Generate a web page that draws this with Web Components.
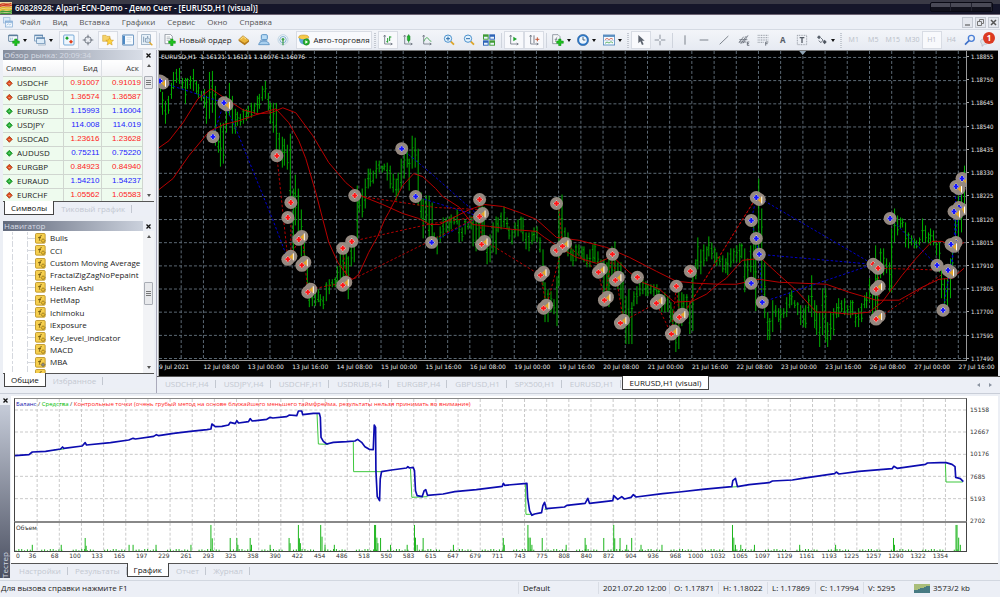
<!DOCTYPE html>
<html lang="ru">
<head>
<meta charset="utf-8">
<title>60828928: Alpari-ECN-Demo - Демо Счет - [EURUSD,H1 (visual)]</title>
<style>
html,body{margin:0;height:100%}
body{font-family:"Open Sans","Noto Sans",sans-serif;font-size:8px;line-height:12px;color:#222;background:#eceff5}
</style>
</head>
<body>
<trade-terminal></trade-terminal>
<script>
const BASE = `*{box-sizing:border-box}
button{font:inherit;color:inherit;background:none;border:0;padding:0;margin:0;cursor:default;white-space:nowrap}
svg{display:block}`;

function define(name, html) {
  customElements.define(name, class extends HTMLElement {
    constructor() {
      super();
      const t = document.createElement('template');
      t.innerHTML = '<style>' + BASE + '</style>' + (typeof html === 'function' ? html(this) : html);
      this.attachShadow({mode: 'open'}).append(t.content.cloneNode(true));
    }
  });
}

/* ---------- icons, drawn on a 36 unit square ---------- */
const axes = '<path d="M8 4v26h22M5 8l3-5 3 5M26 27l5 3-5 3" fill="none" stroke="#6a727e" stroke-width="2.4"/>';
const plus = '<path d="M20 15h7v6h7v7h-7v7h-7v-7h-6v-7h6z" fill="#1fc01f" stroke="#0b8f12" stroke-width="1.5"/>';
const ICONS = {
  newchart: '<rect x="2" y="3" width="27" height="19" rx="1" fill="#f4f8fc" stroke="#4d7192" stroke-width="2.5"/><path d="M2 5h27" stroke="#4d7192" stroke-width="3"/><path d="M8 18v-7M13 17v-6" stroke="#7fa6c4" stroke-width="2"/>' + plus,
  profiles: '<rect x="2" y="3" width="24" height="18" fill="#eaf3fb" stroke="#5b83ab" stroke-width="2"/><rect x="8" y="11" width="24" height="17" fill="#dcebf8" stroke="#5b83ab" stroke-width="2"/><path d="M8 13h24M3 5h24" stroke="#5b83ab" stroke-width="3"/><path d="M12 33h23V19" fill="none" stroke="#8fa6bd" stroke-width="2"/>',
  watch: '<rect x="2" y="3" width="31" height="30" rx="3" fill="#eef6fd" stroke="#5f9bd0" stroke-width="2.5"/><path d="M12 7l5.500 5.500-5.500 5.500-5.500-5.500z" fill="#18a32a"/><path d="M24 17l6 6-6 6-6-6z" fill="#e2401c"/>',
  target: '<circle cx="18" cy="18" r="10" fill="none" stroke="#606873" stroke-width="2.5"/><path d="M18 2v11M18 23v11M2 18h11M23 18h11" stroke="#606873" stroke-width="2.5"/>',
  folder: '<path d="M2 4h10l3 3h9v15H2z" fill="#f5d269" stroke="#c99a2a" stroke-width="1.5"/><path d="M23 11l3.500 7 8 1-6 5 2 9-7.500-4.500-7.500 4.500 2-9-6-5 8-1z" fill="#ffd43c" stroke="#c8901a" stroke-width="1.500"/>',
  terminal: '<rect x="1" y="3" width="34" height="30" rx="2" fill="#f7fbff" stroke="#3f76ae" stroke-width="2.500"/><path d="M3 5h6v26H3z" fill="#4d89c4"/><path d="M14 11h16M14 17h12M14 23h14" stroke="#bccddd" stroke-width="1.500"/>',
  tester: '<rect x="2" y="2" width="26" height="30" fill="#e7f1f9" stroke="#7e9ab3" stroke-width="2"/><path d="M8 8v17M14 12v13M20 6v19" stroke="#6d8ca8" stroke-width="2.500"/><circle cx="20" cy="19" r="7" fill="#d6eafaaa" stroke="#8296a8" stroke-width="2"/><path d="M25 25l9 9" stroke="#e3ab2d" stroke-width="4"/>',
  order: '<path d="M3 1h16l6 6v22H3z" fill="#fbfcfd" stroke="#6d7682" stroke-width="2"/><path d="M8 9h10M8 14h13M8 19h9" stroke="#8c959f" stroke-width="1.800"/>' + plus,
  diamond: '<path d="M2 17L15 5l18 14-13 12z" fill="#eab53a" stroke="#9f6c12" stroke-width="1.500"/><path d="M2 17l18 10 13-8v4L20 34 2 21z" fill="#b57c1c"/><path d="M8 16l8-7 8 6" fill="none" stroke="#fce08c" stroke-width="3"/>',
  person: '<rect x="10" y="2" width="18" height="15" rx="3" fill="#b9dcf6" stroke="#3e82bd" stroke-width="2.500"/><path d="M7 31V19h21" fill="none" stroke="#5b93c4" stroke-width="2"/><path d="M2 32c1-7 7-11 16-11s15 4 16 11z" fill="#a9cfee" stroke="#3f7db6" stroke-width="2"/>',
  signal: '<g fill="none" stroke-width="2.500"><circle cx="18" cy="17" r="15" stroke="#b7d0e0"/><circle cx="18" cy="17" r="9.500" stroke="#6fa9cc"/></g><circle cx="18" cy="16" r="4" fill="#42a64a"/><path d="M18 16v18" stroke="#3c9b45" stroke-width="3.500"/>',
  auto: '<ellipse cx="17" cy="10" rx="15" ry="7" fill="#f7c947" stroke="#b98717" stroke-width="1.500"/><path d="M3 12c0 10 5 19 14 19s13-9 14-19c-8 5-20 5-28 0z" fill="#66a8d8"/><circle cx="25" cy="24" r="9.500" fill="#25b02e" stroke="#0f7a19" stroke-width="1.500"/><path d="M22 19l8 5-8 5z" fill="#fff"/>',
  bars: axes + '<path d="M17 12v14M13 23h4M23 7v14M23 9h5" stroke="#1f9d2d" stroke-width="3" fill="none"/>',
  candle: axes + '<path d="M20 1v25" stroke="#138c20" stroke-width="2.500"/><rect x="16" y="5" width="8" height="15" rx="2" fill="#20b52e" stroke="#0f7d1b" stroke-width="1.500"/>',
  line: axes + '<path d="M9 22C13 12 18 8 22 14s5 7 9 8" fill="none" stroke="#35a141" stroke-width="2.500"/>',
  zoomin: '<path d="M23 22l10 10" stroke="#dca52b" stroke-width="5.500"/><circle cx="15" cy="14" r="11" fill="#e3f2fd" stroke="#4d92cd" stroke-width="3"/><path d="M15 8v12M9 14h12" stroke="#2c6eaa" stroke-width="3"/>',
  zoomout: '<path d="M23 22l10 10" stroke="#dca52b" stroke-width="5.500"/><circle cx="15" cy="14" r="11" fill="#e3f2fd" stroke="#4d92cd" stroke-width="3"/><path d="M9 14h12" stroke="#2c6eaa" stroke-width="3"/>',
  tiles: '<rect x="0" y="1" width="17" height="16" fill="#3f9b35"/><rect x="19" y="1" width="17" height="16" fill="#2d63b7"/><rect x="0" y="19" width="17" height="16" fill="#2d63b7"/><rect x="19" y="19" width="17" height="16" fill="#3f9b35"/><path d="M3 8h11v6H3zM22 8h11v6H22zM3 26h11v6H3zM22 26h11v6H22z" fill="#e9f3fb"/>',
  scroll: axes + '<path d="M16 8l11 7-11 7z" fill="#1fa42e"/>',
  shift: axes + '<path d="M18 4v23" stroke="#5e6672" stroke-width="2.500"/><path d="M28 10v12M22 16h12" stroke="#c4593a" stroke-width="3"/>',
  indic: '<path d="M2 2h16l6 6v21H2z" fill="#f6f8fa" stroke="#6d7682" stroke-width="2"/><path d="M9 24c4 0 2-15 7-15M8 16h8" fill="none" stroke="#5f6975" stroke-width="2"/>' + plus,
  clock: '<circle cx="18" cy="18" r="14" fill="#eef6fd" stroke="#2a76c7" stroke-width="5"/><circle cx="18" cy="18" r="17" fill="none" stroke="#174b86" stroke-width="1.500"/><path d="M18 9v9h7" fill="none" stroke="#2e4a68" stroke-width="2.500"/>',
  template: '<rect x="1" y="3" width="34" height="30" fill="#f7fbff" stroke="#4a82ba" stroke-width="2.500"/><path d="M1 6h34" stroke="#4a82ba" stroke-width="5"/><path d="M6 17l6-4 6 4 6-4 6 3" fill="none" stroke="#c5432c" stroke-width="2.200"/><path d="M6 28l6-4 6 3 6-4 6 4" fill="none" stroke="#2e9c3a" stroke-width="2.200"/><path d="M3 20h30" stroke="#9ab4cc" stroke-width="1.500"/>',
  cursor: '<path d="M10 3v25l6-6 5 11 5-2-5-11h8z" fill="#5c636e"/>',
  cross: '<path d="M18 2v13M18 21v13M2 18h13M21 18h13" stroke="#7a818b" stroke-width="2.500"/>',
  vline: '<path d="M18 4v28" stroke="#666d77" stroke-width="2.500"/>',
  hline: '<path d="M5 18h26" stroke="#666d77" stroke-width="2.500"/>',
  trend: '<path d="M5 31L31 6" stroke="#666d77" stroke-width="2.500"/>',
  channel: '<path d="M3 26L17 8M8 30L25 6M15 28L30 4M4 17h24M3 24h22" stroke="#5a616c" stroke-width="2.200"/><path d="M34 24h-6v10h6M28 29h5" fill="none" stroke="#4d545e" stroke-width="2.200"/>',
  fibo: '<path d="M2 4h32M2 11h32M2 18h32M2 25h18" stroke="#757c86" stroke-width="2.200" stroke-dasharray="3 2"/><path d="M26 35V24h8M26 29h6" fill="none" stroke="#4d545e" stroke-width="2.200"/>',
  textbox: '<rect x="4" y="4" width="28" height="28" fill="none" stroke="#757c86" stroke-width="2" stroke-dasharray="3 2"/><path d="M11 11h14M18 11v16" stroke="#555c66" stroke-width="4"/>',
  arrows: '<path d="M9 4l6 6-6 6-6-6z" fill="#59606b"/><path d="M15 12l7 7M8 20l7 6 6-8" stroke="#59606b" stroke-width="2.500" fill="none"/><path d="M26 17l6 7-6 7-6-7z" fill="#4d545e"/>',
  search: '<circle cx="22" cy="13" r="9" fill="none" stroke="#4a7fd6" stroke-width="4"/><path d="M15 20L3 32" stroke="#3c6fc8" stroke-width="5"/>'
};
const icon = (n, s = 12) => `<svg width="${s}" height="${s}" viewBox="0 0 36 36" aria-hidden="true">${ICONS[n]}</svg>`;

/* ---------- one toolbar button ---------- */
define('tool-button', el => `<style>
:host{display:flex;flex:1;height:18px}
button{flex:1;display:flex;align-items:center;justify-content:center;gap:3px;border:1px solid transparent}
:host([on]) button{background:#f8f9fc;border-color:#d8dce4}
i{border:2px solid transparent;border-top:3px solid #111;border-bottom:0}
</style><button${el.hasAttribute('label') ? ` aria-label="${el.getAttribute('label')}"` : ''}>${el.hasAttribute('icon') ? icon(el.getAttribute('icon')) : ''}<slot></slot>${el.hasAttribute('drop') ? '<i></i>' : ''}</button>`);

const tools = s => s.split(' ').map(t => {
  const [n, f] = t.split('/');
  return `<tool-button icon="${n}" label="${n}"${f === 'on' ? ' on' : ''}${f === 'drop' ? ' drop' : ''}></tool-button>`;
}).join('');

define('tool-bar', `<style>
:host{display:flex;align-items:center;height:20px;overflow:hidden;background:linear-gradient(#f3f5f9,#e6eaf2);padding-left:4px;color:#222}
.g{display:flex;flex:none}
.sep{flex:none;width:1px;height:15px;background:#cfd4dd;margin:0 2px}
.grip{flex:none;width:2px;height:15px;background:repeating-linear-gradient(#c3c8d1 0 1px,#eef1f6 1px 2px);margin:0 2px}
.tf{color:#b9bec8;font-size:7px}
b{color:#555c66}
.bell{position:relative;width:22px;height:18px}
.bell svg{position:absolute;left:2px;top:6px}
.badge{position:absolute;left:5px;top:1px;width:12px;height:12px;border-radius:6px;background:#dc3a22;color:#fff;font-weight:700;line-height:12px;text-align:center}
</style>
<div class="g" style="width:52px">${tools('newchart/drop profiles/drop')}</div>
<div class="g" style="width:98px;margin-left:3px">${tools('watch/on target folder/on terminal tester/on')}</div>
<div class="sep"></div>
<div class="g" style="width:72px"><tool-button icon="order">Новый ордер</tool-button></div>
<div class="g" style="width:59px">${tools('diamond person signal')}</div>
<div class="g" style="width:76px;margin-left:3px"><tool-button icon="auto" on>Авто-торговля</tool-button></div>
<div class="grip"></div>
<div class="g" style="width:59px">${tools('bars/on candle line')}</div>
<div class="g" style="width:60px;margin-left:2px">${tools('zoomin zoomout tiles')}</div>
<div class="sep"></div>
<div class="g" style="width:40px">${tools('scroll/on shift/on')}</div>
<div class="sep"></div>
<div class="g" style="width:76px">${tools('indic/drop clock/drop template/drop')}</div>
<div class="grip"></div>
<div class="g" style="width:39px">${tools('cursor/on cross')}</div>
<div class="sep"></div>
<div class="g" style="width:98px">${tools('vline hline trend channel fibo')}</div>
<div class="g" style="width:39px"><tool-button><b>A</b></tool-button>${tools('textbox')}</div>
<div class="g" style="width:26px">${tools('arrows/drop')}</div>
<div class="grip"></div>
<div class="g tf" style="width:117px"><tool-button>M1</tool-button><tool-button>M5</tool-button><tool-button>M15</tool-button><tool-button>M30</tool-button><tool-button on>H1</tool-button><tool-button>H4</tool-button></div>
<div class="g" style="width:17px">${tools('search')}</div>
<div class="bell"><svg width="10" height="10" viewBox="0 0 30 30"><path d="M2 12C2 4 24 4 24 13s-9 9-11 9l-7 6v-7c-3-2-4-5-4-9z" fill="#dfe3e9" stroke="#adb4be" stroke-width="2"/></svg><span class="badge">1</span></div>`);

define('title-bar', `<style>
:host{display:flex;align-items:center;height:15px;background:linear-gradient(#3a3a46 0 4px,#15162a 4px 14px,#6b6272 14px);color:#fff;font-weight:600}
svg{margin-right:3px}
.win{margin:0 7px 4px auto;align-self:flex-start;margin-top:2px;display:flex;width:63px;height:10px;border:1px solid #0a0a14;border-radius:2px;background:linear-gradient(#4a4a56 50%,#12121c 50%)}
.win button{flex:1;border-right:1px solid #22222e}
</style>
<svg width="12" height="12" viewBox="0 0 36 36"><rect width="36" height="36" fill="#e9d9a0"/><path d="M0 9c8-9 16 3 34-5M0 14c8-9 16 3 36-5" stroke="#d2371f" stroke-width="4" fill="none"/><path d="M0 20c8-9 16 3 36-5M0 26c8-9 16 3 36-5" stroke="#e3b222" stroke-width="3.500" fill="none"/><path d="M0 31c8-9 16 3 36-5M0 37c8-9 16 3 36-5" stroke="#3c9a35" stroke-width="4" fill="none"/></svg>
<span>60828928: Alpari-ECN-Demo - Демо Счет - [EURUSD,H1 (visual)]</span>
<div class="win"><button aria-label="Свернуть"></button><button aria-label="Развернуть"></button><button aria-label="Закрыть"></button></div>`);

define('menu-bar', `<style>
:host{display:flex;align-items:center;height:15px;background:#edf0f7;border-bottom:1px solid #d5dae3;color:#555}
svg{margin:0 7px 0 3px}
nav{display:flex;gap:12px}
.w{margin-left:auto;display:flex;gap:2px;padding-right:1px}
.w button{width:11px;height:11px;border:1px solid #c3c8d1;background:#e4e7ee;display:grid;place-items:center}
.w svg{margin:0}
</style>
<svg width="10" height="11" viewBox="0 0 30 33"><rect x="1" y="2" width="20" height="16" fill="#dbe9f7" stroke="#8fb2d8" stroke-width="2"/><rect x="7" y="12" width="21" height="18" fill="#f1f7fd" stroke="#7aa5d3" stroke-width="2"/><path d="M7 15h21" stroke="#7aa5d3" stroke-width="4"/><path d="M11 25l5-5 4 4 5-4" stroke="#8fb2d8" stroke-width="2" fill="none"/></svg>
<nav><button>Файл</button><button>Вид</button><button>Вставка</button><button>Графики</button><button>Сервис</button><button>Окно</button><button>Справка</button></nav>
<div class="w"><button aria-label="Свернуть окно"><svg width="7" height="7" viewBox="0 0 7 7"><path d="M1 6h5" stroke="#444"/></svg></button><button aria-label="Восстановить окно"><svg width="7" height="7" viewBox="0 0 7 7"><path d="M2.500 2.500v-2h4v4h-2M.5 2.500h4v4h-4z" stroke="#777" fill="none"/></svg></button><button aria-label="Закрыть окно"><svg width="7" height="7" viewBox="0 0 7 7"><path d="M1 1l5 5M6 1L1 6" stroke="#555" stroke-width="1.500"/></svg></button></div>`);

/* ---------- tabs along the bottom of a panel; items are split by "|" ---------- */
define('tab-strip', el => `<style>
:host{display:flex;flex:none;gap:var(--tab-gap,0);height:var(--strip,15px);background:#eceff6;border-top:1px solid #555;padding-left:var(--tab-start,1px);color:#c3c8d1}
button{height:13px;padding:0 7px;line-height:11px;position:relative}
button:not(.on)::after{content:"";position:absolute;right:0;top:3px;height:8px;border-right:1px solid #c3c8d1}
.on{background:#fff;color:#111;border:1px solid #444;border-top:0;margin-top:-1px;height:14px;line-height:13px}
:host(:not([arrows])) .on{padding:0 6px}
.end{margin-left:auto;display:flex;gap:9px;align-items:center;padding-right:6px}
.end i{border:2px solid transparent}
.l{border-right:3px solid #8a93a0!important}.r{border-left:3px solid #8a93a0!important}
</style>${el.getAttribute('tabs').split('|').map((t, i) => `<button class="${i == el.getAttribute('active') ? 'on' : ''}">${t}</button>`).join('')}${el.hasAttribute('arrows') ? '<span class="end"><i class="l"></i><i class="r"></i></span>' : ''}`);

/* ---------- docked panel with caption ---------- */
define('dock-panel', el => `<style>
:host{display:flex;flex-direction:column;min-height:0}
header{flex:none;display:flex;justify-content:space-between;height:10px;line-height:9px;background:linear-gradient(90deg,#858d9d,#dfe4ed);color:#d6dbe4;padding:0 0 0 1px}
:host([dark]) header{background:linear-gradient(90deg,#626a7c,#d3d9e4)}
header button{width:11px;height:10px;background:#eceff6;display:grid;place-items:center}
.body{flex:1;display:flex;min-height:0;background:#fff}
.c{flex:1;min-width:0;overflow:hidden;display:flex;flex-direction:column}
.sb{width:11px;flex:none;background:#f2f3f6;display:flex;flex-direction:column;align-items:center;justify-content:space-between;padding:4px 0;position:relative}
.sb i{border:2px solid transparent}
.u{border-bottom:3px solid #555!important;border-top:0!important}.d{border-top:3px solid #555!important;border-bottom:0!important}
.th{position:absolute;left:1px;width:9px;height:var(--th);top:var(--tt);border:1px solid #a9adb5;border-radius:1px;background:repeating-linear-gradient(#777 0 1px,transparent 1px 2px) center/5px 5px no-repeat,#e8e9ec}
</style><header><span>${el.getAttribute('caption')}</span><button aria-label="Закрыть"><svg width="5" height="5" viewBox="0 0 5 5"><path d="M.5.5l4 4M4.500.5l-4 4" stroke="#111" stroke-width="1.300"/></svg></button></header>
<div class="body"><div class="c"><slot></slot></div><div class="sb"><i class="u"></i><span class="th"></span><i class="d"></i></div></div><slot name="tabs"></slot>`);

const QUOTES = [['USDCHF','0.91007','0.91019',0],['GBPUSD','1.36574','1.36587',0],['EURUSD','1.15993','1.16004',1],['USDJPY','114.008','114.019',1],['USDCAD','1.23616','1.23628',0],['AUDUSD','0.75211','0.75220',1],['EURGBP','0.84923','0.84940',0],['EURAUD','1.54210','1.54237',1],['EURCHF','1.05562','1.05583',0]];
define('market-watch', `<style>
:host{display:block}
table{width:100%;border-collapse:collapse;table-layout:fixed}
col.s{width:60px}col.b{width:38px}
th{height:16px;padding:0 3px;font-weight:400;text-align:right;background:linear-gradient(#fff,#f1f2f5);border-right:1px solid #dcdfe4;color:#333}
th:first-child{text-align:left}
td{height:14px;padding:0 1px;background:#eefbee;border:1px solid #d0d6d0;border-left:0;text-align:right;line-height:12px;font-family:"Liberation Sans",sans-serif;color:#f22}
.up td{color:#22f}
td:first-child,.up td:first-child{text-align:left;color:#222;padding-left:3px;font-family:"Open Sans",sans-serif}
svg{display:inline-block;vertical-align:-1px;margin-right:4px}
</style><table><colgroup><col class="s"><col class="b"><col></colgroup><thead><tr><th>Символ</th><th>Бид</th><th>Аск</th></tr></thead><tbody>${QUOTES.map(q => `<tr class="${q[3] ? 'up' : ''}"><td><svg width="7" height="7" viewBox="0 0 21 21"><path d="M10 1l9 9-9 9-9-9z" fill="${q[3] ? '#1eae2e' : '#e04a1c'}" stroke="${q[3] ? '#0c7a18' : '#98300c'}" stroke-width="2"/><path d="${q[3] ? 'M10 6l4 5H6z' : 'M10 14l4-5H6z'}" fill="#fff6"/></svg>${q[0]}</td><td>${q[1]}</td><td>${q[2]}</td></tr>`).join('')}</tbody></table>`);

define('nav-tree', `<style>
:host{display:block;flex:1;min-height:0;overflow:hidden;contain:size}
ul{list-style:none;margin:0;padding:1px 0 0 9px;height:calc(100% + 8px);display:grid;grid-auto-rows:minmax(12px,1fr)}
li{display:grid;grid-template-columns:15px 8px 15px 1fr;align-items:center;white-space:nowrap;line-height:12px}
li::before{content:"";align-self:stretch;border-left:1px dashed #d5d8de}
li i{align-self:stretch;border-left:1px dashed #d5d8de;background:linear-gradient(#d5d8de,#d5d8de) 0 50%/7px 1px no-repeat}
</style><ul>${'Bulls|CCI|Custom Moving Average|FractalZigZagNoPepaint|Heiken Ashi|HetMap|Ichimoku|iExposure|Key_level_indicator|MACD|MBA|'.split('|').map((n, k) => `<li><i></i><svg width="11" height="11" viewBox="0 0 33 33"><rect x="1.500" y="1.500" width="29" height="29" rx="3" fill="#f6cf4e" stroke="#b88f22" stroke-width="2.500"/><path d="M20 8c-6-2-5 7-7 15M9 14h9" fill="none" stroke="#5f4708" stroke-width="2.500"/><path d="M24 17l6 6-6 6-6-6z" fill="${k === 10 ? '#8a8a8a' : '#f0c030'}" stroke="#6b5416" stroke-width="2"/></svg><span>${n}</span></li>`).join('')}</ul>`);

/* ---------- price chart ---------- */
const BARS = `160 76 92,162 92 115,165 101 124,168 96 114,171 83 99,173 72 89,176 69 83,179 68 84,182 78 89,185 78 104,187 78 89,190 76 89,193 69 91,196 81 94,198 84 98,201 91 101,204 89 108,206 96 124,209 72 119,212 71 113,215 86 146,218 136 153,220 123 167,223 123 164,226 96 133,229 83 116,232 96 134,235 109 134,237 112 126,240 114 126,243 109 124,246 109 121,248 106 118,251 103 118,254 103 114,257 96 113,259 94 109,262 86 101,265 81 99,268 93 111,270 103 124,273 103 133,276 103 156,279 133 161,282 137 168,284 139 166,287 145 170,290 134 206,293 189 258,295 175 226,298 189 240,301 210 257,304 237 270,307 262 290,309 283 308,312 290 307,315 292 307,318 290 303,320 295 307,323 297 310,326 283 302,329 280 295,332 280 288,335 278 288,337 267 288,340 253 280,343 252 285,346 250 290,348 257 300,351 243 267,354 237 263,357 186 240,359 196 213,362 189 218,365 179 209,368 169 189,370 169 187,373 171 184,376 161 179,379 161 173,382 166 173,384 164 171,387 163 181,390 166 189,393 174 193,396 179 201,398 173 196,401 159 189,404 146 179,407 146 168,409 159 191,412 136 169,415 138 168,418 149 206,421 193 219,423 199 239,426 196 223,429 196 240,432 203 243,434 233 245,437 237 255,440 227 243,443 218 238,446 218 233,449 217 232,451 215 230,454 217 225,457 210 225,459 220 243,462 228 242,465 220 235,468 222 230,471 217 230,473 217 247,476 220 252,479 200 247,482 200 243,484 207 247,487 237 265,490 235 263,493 223 253,496 217 255,498 218 233,501 213 230,504 207 228,507 218 230,509 227 240,512 230 245,515 223 238,518 220 237,521 217 233,523 218 242,526 233 250,529 233 252,532 232 245,534 228 242,537 227 243,540 238 253,543 250 287,545 283 323,548 290 323,551 292 313,554 300 315,557 277 327,559 198 287,562 195 243,565 228 243,568 233 257,571 240 262,573 250 267,576 245 262,579 245 257,582 247 260,584 247 263,587 255 268,590 250 268,593 245 263,595 243 263,598 252 270,601 260 277,604 260 297,607 263 303,609 257 308,612 247 277,615 242 283,618 263 290,621 263 300,623 273 323,626 297 345,629 290 345,632 303 345,634 292 307,637 287 305,640 282 297,643 280 295,646 282 297,648 285 297,651 285 295,654 285 297,657 285 303,659 290 305,662 295 313,665 293 313,668 297 313,671 303 323,673 310 330,676 320 353,679 287 350,682 293 327,684 295 320,687 295 315,690 303 335,693 268 332,696 260 280,698 238 270,701 250 275,704 245 267,707 247 262,709 237 257,712 243 260,715 248 264,717 253 267,720 257 266,723 256 273,726 259 274,728 253 276,731 249 268,734 249 264,737 246 263,740 244 264,742 244 259,745 249 293,748 259 279,751 246 273,754 218 286,756 232 312,759 179 253,762 209 293,765 263 319,768 313 341,770 319 341,773 301 333,776 306 318,779 309 323,781 309 331,784 309 319,787 298 318,790 293 309,792 291 306,795 301 309,798 303 316,801 306 326,804 309 328,806 306 329,809 296 313,812 276 318,815 301 329,817 306 336,820 313 348,823 289 336,826 289 343,828 323 348,831 313 341,834 309 336,837 304 319,839 299 318,842 301 313,845 299 316,848 306 316,851 301 319,853 301 316,856 313 328,859 309 328,862 304 323,865 296 309,867 293 309,870 279 303,873 286 323,876 246 323,878 263 309,881 249 279,884 249 276,887 259 274,890 263 293,892 229 293,895 209 243,898 216 236,901 218 229,903 219 228,906 223 248,909 233 249,912 236 246,915 239 249,917 241 249,920 238 246,923 219 243,926 226 243,929 233 244,931 229 246,934 231 246,937 243 256,940 243 273,942 266 299,945 279 309,948 269 313,951 259 299,953 239 273,956 206 253,959 196 246,962 189 233,965 166 209`;
const SMOOTH = [
  [159,148,169,141,183,123,198,99,211,89,226,99,243,110,258,114,271,113,283,108,296,113,313,136,329,163,346,183,363,197,383,205,403,214,419,219,430,225,440,225,450,220,470,210,485,205,503,207,520,213,537,220,557,238,580,241,607,248,630,258,657,272,677,282,697,284,720,285,737,285,760,280,780,283,827,285,850,293,877,301,900,301,923,288,940,280,953,279,965,269],
  [159,190,173,179,189,156,209,132,223,125,239,121,256,115,276,109,289,123,299,141,306,159,316,193,323,220,329,243,338,263,348,277,353,280,359,275,369,253,378,237,385,220,389,213,403,186,414,174,423,177,436,189,443,197,460,208,473,225,490,227,513,230,537,232,545,238,563,250,577,258,597,264,613,257,630,273,643,283,660,290,675,303,693,302,707,295,720,284,727,279,743,261,762,259,777,273,797,291,817,313,830,313,850,315,870,313,883,303,903,276,917,259,933,242,943,242,957,248,965,243]
];
const BLUE = '160 82 224 103 213 137,224 103 236 129 274 223 288 260,402 149 434 176 480 217,416 197 480 217,432 243 480 217,761 199 874 265 760 255,763 303 874 265,757 198 752 221 760 255 763 303,891 219 938 266 949 271,944 311 955 247 957 187,952 272 960 208 963 179';
const RED = '277 156 288 260,291 203 291 257 299 240,303 238 305 263 308 293,311 290 347 283 480 217,343 249 347 283,352 242 433 224 480 217,355 196 436 208 480 210,480 200 482 245,486 242 541 276 547 307 563 247 559 204,567 245 599 273 605 301 613 255 624 322 657 304 672 335 677 287 680 318,683 316 757 198,675 333 691 304 757 198,881 269 949 271,881 318 949 271,877 264 881 288 877 320';
/* x, y, colour, and 1 or 2 when an exit arrow sits beside the mark */
const MARKS = '160 81 b 1,224 103 b 1,213 137 b 0,402 149 b 0,416 197 b 0,432 243 b 0,277 156 r 0,291 203 r 0,288 218 r 0,288 260 r 2,299 240 r 2,302 266 r 2,308 293 r 2,343 249 r 0,352 242 r 0,343 286 r 2,355 196 r 0,480 200 r 0,480 217 r 2,482 245 r 2,541 276 r 2,544 309 r 2,557 204 r 0,557 251 r 0,563 247 r 2,599 273 r 2,605 301 r 2,613 255 r 0,616 281 r 2,621 324 r 2,638 278 r 0,657 304 r 2,672 335 r 2,677 287 r 0,680 318 r 2,691 272 r 0,757 198 b 1,752 221 b 0,757 239 b 0,760 255 b 0,752 284 b 0,763 303 b 0,891 219 b 0,938 266 b 0,949 271 b 1,944 311 b 0,957 187 b 1,963 179 b 1,960 208 b 1,955 212 b 1,957 243 b 0,952 245 b 1,874 265 r 1,879 269 r 0,877 290 r 2,877 320 r 2';
const pairs = (a) => { let s = ''; for (let i = 0; i < a.length; i += 2) s += (i ? 'L' : 'M') + a[i] + ' ' + a[i + 1]; return s; };
const traces = s => s.split(',').map(p => pairs(p.split(' '))).join('');

function plotSvg() {
  let grid = '', bars = '';
  for (let k = 1; k < 37; k++) grid += `M${(159 + k * 22.23).toFixed(1)} 51v310`;
  for (let k = 0; k < 14; k++) grid += `M159 ${(57.5 + k * 23.23).toFixed(1)}h808`;
  BARS.split(',').forEach((b, i) => {
    const [x, h, l] = b.split(' ').map(Number), d = l - h;
    const o = h + d * ((i * 37 % 10) / 14 + .15), c = h + d * ((i * 53 % 10) / 14 + .15);
    bars += `M${x + .5} ${h}V${l}M${x - .6} ${o.toFixed(1)}h1M${x + 1} ${c.toFixed(1)}h.7`;
  });
  const mark = MARKS.split(',').map(m => m.split(' ')).map(([x, y, c, p]) => {
    x = +x; y = +y; const dy = p === '1' ? 2 : -3;
    const halo = `<circle cx="${x}" cy="${y}" r="6.500"/>` + (p !== '0' ? `<circle cx="${x + 3}" cy="${y + dy}" r="6.500"/>` : '');
    const arrow = p !== '0' ? `<path d="M${x + 5.5} ${y + dy - 3}v7l-4-3.500z" fill="#e5a628"/><path d="M${x + 5.500} ${y + dy - 3}v7" stroke="#fff" stroke-width="1"/>` : '';
    return `<g fill="#958980">${halo}</g><path d="M${x} ${y - 3.3}l3.300 3.300-3.300 3.300-3.300-3.300z" fill="#e8e4e2"/>${arrow}<path d="M${x - 1} ${y - 2.5}h2v1.500h1.500v2h-1.500v1.500h-2v-1.500h-1.500v-2h1.500z" fill="${c === 'b' ? '#1414ff' : '#ff1414'}"/>`;
  }).join('');
  return `<svg viewBox="159 51 808 310" preserveAspectRatio="none" role="img" aria-label="EURUSD,H1"><path d="${grid}" stroke="#5c6974" stroke-width="1" stroke-dasharray="3 2" fill="none"/><path d="${bars}" stroke="#00b000" stroke-width="1" fill="none"/><g fill="none" stroke="#b80000"><path d="${pairs(SMOOTH[0])}"/><path d="${pairs(SMOOTH[1])}"/></g><g fill="none" stroke-dasharray="2.500 2"><path d="${traces(BLUE)}" stroke="#0000cc"/><path d="${traces(RED)}" stroke="#b40000"/></g>${mark}<path d="M800 51h7l-3.500 4z" fill="#90a4b4"/></svg>`;
}

define('price-chart', `<style>
:host{flex:1;min-height:0;display:grid;grid-template-columns:minmax(0,1fr) 31px;grid-template-rows:minmax(0,1fr) 15px;background:#000;color:#e8e8e8;font-family:"DejaVu Sans Condensed","DejaVu Sans",sans-serif;font-size:6px;line-height:8px;overflow:hidden;border-left:1px solid #aaa;border-top:1px solid #777;margin:0 2px 0 1px}
.plot{position:relative;border-right:1px solid #999;border-bottom:1px solid #999}
.plot svg{position:absolute;inset:0;width:100%;height:100%}
.t{position:absolute;left:2px;top:2px;white-space:pre;font-family:"DejaVu Sans",sans-serif}
.p{grid-column:2;grid-row:1/3;display:flex;flex-direction:column;justify-content:space-between;padding:2px 0 13px 0}
.p span::before{content:"";display:inline-block;width:2px;height:1px;background:#aaa;margin-right:2px;vertical-align:2px}
.x{grid-column:1/3;grid-row:2;display:grid;grid-template-columns:repeat(19,1fr);margin-right:-5px;padding-top:2px;white-space:nowrap;font-family:"DejaVu Sans",sans-serif}
</style><div class="plot">${plotSvg()}<span class="t">EURUSD,H1  1.16121 1.16121 1.16076 1.16076</span></div>
<div class="x">${'9 Jul 2021|12 Jul 08:00|13 Jul 00:00|13 Jul 16:00|14 Jul 08:00|15 Jul 00:00|15 Jul 16:00|16 Jul 08:00|19 Jul 00:00|19 Jul 16:00|20 Jul 08:00|21 Jul 00:00|21 Jul 16:00|22 Jul 08:00|23 Jul 00:00|23 Jul 16:00|26 Jul 08:00|27 Jul 00:00|27 Jul 16:00'.split('|').map(t => `<span>${t}</span>`).join('')}</div>
<div class="p">${'1.18855 1.18750 1.18645 1.18540 1.18435 1.18330 1.18225 1.18120 1.18015 1.17910 1.17805 1.17700 1.17595 1.17490'.split(' ').map(t => `<span>${t}</span>`).join('')}</div>`);

/* ---------- strategy tester; both plots use units of a third of a pixel ---------- */
const BALANCE = [43,195,85,192,95,184,135,182,180,175,186,169,190,173,245,166,254,156,258,163,330,156,385,148,398,143,405,145,460,137,468,132,475,135,520,128,570,122,620,117,632,115,635,100,645,108,665,107,685,103,690,95,705,99,710,90,715,97,745,93,750,84,756,91,800,86,810,80,818,82,860,78,868,73,890,75,895,61,905,61,908,72,940,68,958,68,961,80,963,140,970,152,980,160,1000,155,1040,153,1065,151,1073,146,1085,155,1095,168,1108,176,1120,177,1123,103,1127,110,1128,240,1132,318,1139,330,1141,265,1145,243,1175,238,1220,232,1224,228,1229,232,1240,230,1244,240,1247,300,1252,315,1267,318,1273,300,1278,297,1283,314,1330,310,1365,303,1430,297,1508,287,1511,278,1515,284,1582,278,1584,320,1590,360,1597,374,1605,370,1626,366,1630,345,1635,335,1640,354,1695,349,1702,344,1757,338,1765,323,1770,338,1840,330,1843,315,1855,326,1867,318,1875,325,1895,320,1902,312,1910,319,1990,309,2040,304,2110,296,2198,288,2201,270,2209,263,2215,288,2250,282,2310,276,2320,271,2380,268,2410,263,2507,249,2512,244,2520,250,2580,242,2680,234,2685,227,2695,233,2780,221,2786,217,2825,216,2842,216,2860,221,2869,228,2871,260,2885,264,2894,273];
const FUNDS = '160 178 190 175,951 70 955 160 985 161,1060 153 1061 243 1145 243,1232 235 1236 320 1283 318,1578 280 1579 371 1603 371,1635 356 1645 355,2198 289 2215 288,2840 218 2842 274 2892 274';
const VOLUME = '632 404,636 445,254 444,257 468,95 465,182 465,386 465,398 465,467 465,572 465,690 444,710 444,713 465,750 444,754 465,810 465,867 444,870 460,895 404,898 445,901 460,962 404,966 440,975 465,1003 465,1124 404,1127 404,1131 443,1134 460,1142 444,1172 465,1222 465,1244 404,1247 443,1252 465,1270 444,1361 465,1511 444,1514 465,1585 404,1588 443,1592 443,1597 465,1628 444,1700 465,1757 444,1760 465,1813 444,1843 404,1846 445,1862 444,1882 465,1897 444,1925 465,1988 465,2200 404,2204 443,2209 465,2225 465,2266 465,2402 465,2510 465,2684 444,2687 465,2872 404,2875 404,2880 443,2885 465';
const cols = (y, h) => { let s = ''; for (let k = 1; k < 43; k++) s += `M${(43 + k * 66.6).toFixed(1)} ${y}v${h}`; return s; };
const rowsAt = [58, 124, 191, 257, 324].map(y => `M43 ${y}h2859`).join('');
let small = '';
for (let k = 0; k < 330; k++) { const r = (k * k * 31 + k * 17) % 11; if (r < 5) small += `M${46 + k * 8.600} 485v-${3 + r}`; }

define('tester-panel', `<style>
:host{display:grid;grid-template-columns:10px minmax(0,1fr);column-gap:1px;flex:none;border-top:1px solid #c9ced8;padding:2px 2px 2px 0;background:#eceff5}
aside{display:flex;flex-direction:column;align-items:center}
aside button{height:9px}
.v{flex:1;width:10px;padding-bottom:2px;writing-mode:vertical-rl;transform:rotate(180deg);text-align:left;line-height:10px;color:#d4d9e2;background:linear-gradient(#4a4f60,#c5cbd8)}
main{min-width:0;display:flex;flex-direction:column}
.w{background:#fff;display:grid;grid-template-columns:minmax(0,1fr) 31px;padding:2px 0 0 3px;font-family:"DejaVu Sans",sans-serif;font-size:6px;line-height:8px;color:#333}
.a,.b{position:relative;border:1px solid #444;border-top-color:#888;height:123px}
.a{border-bottom:0}
.b{height:31px;border-top:2px solid #888}
svg{width:100%;height:100%}
.t{position:absolute;left:1px;top:1px;color:#333;white-space:nowrap}
.a .t{font-family:"Open Sans",sans-serif}
.t b{font-weight:400;color:#11a}.t u{text-decoration:none;color:#0b0}.t em{font-style:normal;color:#f22}
.y{grid-column:2;grid-row:1/3;display:flex;flex-direction:column;justify-content:space-between;height:119px;margin-top:8px;padding-left:3px}
.x{grid-column:1;display:grid;grid-template-columns:repeat(42,minmax(0,1fr));padding-right:19px;height:11px;text-align:right;align-items:start}
.x span:first-child{display:flex;justify-content:space-between;padding-left:1px}
</style><aside><button aria-label="Закрыть"><svg style="width:5px;height:5px" viewBox="0 0 5 5"><path d="M.5.5l4 4M4.500.5l-4 4" stroke="#111" stroke-width="1.300"/></svg></button><div class="v">Тестер</div></aside>
<main><div class="w">
<div class="a"><svg viewBox="43 25 2859 366" preserveAspectRatio="none" role="img" aria-label="Баланс"><path d="${cols(25, 366) + rowsAt}" stroke="#c9c9c9" stroke-width="3" stroke-dasharray="9 6" fill="none"/><path d="${traces(FUNDS)}" fill="none" stroke="#3cc83c" stroke-width="3"/><path d="${pairs(BALANCE)}" fill="none" stroke="#0c0cb0" stroke-width="5" stroke-linejoin="round"/></svg><span class="t"><b>Баланс</b> / <u>Средства</u> / <em>Контрольные точки (очень грубый метод на основе ближайшего меньшего таймфрейма, результаты нельзя принимать во внимание)</em></span></div>
<div class="b"><svg viewBox="43 398 2859 86" preserveAspectRatio="none" role="img" aria-label="Объем"><path d="${cols(398, 86)}" stroke="#c9c9c9" stroke-width="3" stroke-dasharray="9 6" fill="none"/><path d="${small}${VOLUME.split(',').map(v => v.split(' ')).map(([x, y]) => `M${x} 485V${y}`).join('')}" stroke="#18b418" stroke-width="3" fill="none"/></svg><span class="t">Объем</span></div>
<div class="x"><span><span>0</span><span>36</span></span>${'68 100 133 165 197 229 261 293 325 358 390 422 454 486 518 550 583 615 647 679 711 743 775 808 840 872 904 936 968 1000 1032 1065 1097 1129 1161 1193 1225 1257 1290 1322 1354'.split(' ').map(t => `<span>${t}</span>`).join('')}</div>
<div class="y">${'15158 12667 10176 7685 5193 2702'.split(' ').map(t => `<span>${t}</span>`).join('')}</div>
</div><tab-strip tabs="Настройки|Результаты|График|Отчет|Журнал" active="2"></tab-strip></main>`);

define('status-bar', `<style>
:host{display:flex;flex:none;align-items:center;height:17px;padding-bottom:2px;background:#eceff6;border-top:1px solid #d2d7e0;padding-left:1px;color:#222;white-space:nowrap}
span{flex:none;border-left:1px solid #d9dde5;padding-left:4px}
.m{flex:1;border:0;padding:0}
svg{flex:none;margin-right:3px}
</style><span class="m">Для вызова справки нажмите F1</span><span style="width:80px">Default</span><span style="width:71px">2021.07.20 12:00</span><span style="width:49px">O: 1.17871</span><span style="width:49px">H: 1.18022</span><span style="width:48px">L: 1.17869</span><span style="width:48px">C: 1.17994</span><span style="width:51px">V: 5295</span>
<svg width="16" height="9" viewBox="0 0 16 9"><path d="M1 0v9M3 0v9M5 0v9M7 0v9M9 0v9M11 0v9M13 0v9M15 0v9" stroke="#7d9c28" stroke-width="1.200"/><path d="M1 6v3M3 6v3M5 5v4M7 4v5M9 4v5M11 3v6M13 2v7M15 2v7" stroke="#1f5f87" stroke-width="1.400"/></svg><div style="width:67px">3573/2 kb</div>`);

define('trade-terminal', `<style>
:host{display:flex;flex-direction:column;min-height:100vh;overflow:hidden}
.main{flex:1;display:flex;min-height:343px}
.left{width:155px;flex:none;display:flex;flex-direction:column;padding:0 1px 5px 3px;gap:5px}
.left dock-panel:first-child{flex:none;height:166px}
.left dock-panel:last-child{flex:1}
.chart{flex:1;min-width:0;display:flex;flex-direction:column;background:#eceff5;border-left:1px solid #aab;margin-left:1px;--strip:17px;--tab-gap:1px}
</style><title-bar></title-bar><menu-bar></menu-bar><tool-bar></tool-bar>
<div class="main"><div class="left">
<dock-panel caption="Обзор рынка: 20:09:34" style="--tt:16px;--th:13px"><market-watch></market-watch><tab-strip slot="tabs" tabs="Символы|Тиковый график" active="0"></tab-strip></dock-panel>
<dock-panel dark caption="Навигатор" style="--tt:51px;--th:23px"><nav-tree></nav-tree><tab-strip slot="tabs" tabs="Общие|Избранное" active="0"></tab-strip></dock-panel>
</div><div class="chart"><price-chart></price-chart><tab-strip arrows tabs="USDCHF,H4|USDJPY,H4|USDCHF,H1|USDRUB,H4|EURGBP,H4|GBPUSD,H1|SPX500,H1|EURUSD,H1|EURUSD,H1 (visual)" active="8"></tab-strip></div></div>
<tester-panel></tester-panel><status-bar></status-bar>`);
</script>
</body>
</html>
